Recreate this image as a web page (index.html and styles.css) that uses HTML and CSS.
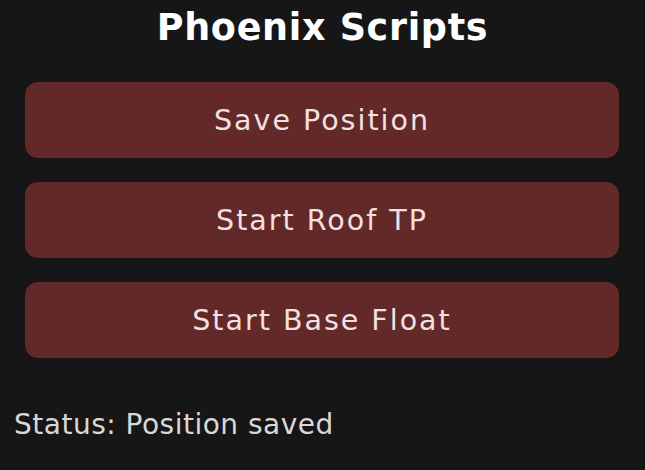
FILE: index.html
```html
<!DOCTYPE html>
<html>
<head>
<meta charset="utf-8">
<link rel="stylesheet" href="styles.css">
</head>
<body>
<main class="panel">
  <h1 class="title">Phoenix Scripts</h1>
  <div class="actions">
    <button class="btn">Save Position</button>
    <button class="btn">Start Roof TP</button>
    <button class="btn">Start Base Float</button>
  </div>
  <p class="status">Status: Position saved</p>
</main>
</body>
</html>
```

FILE: styles.css
```css
html, body {
  margin: 0;
  padding: 0;
  background: #161616;
  height: 100%;
}
.panel {
  font-family: "DejaVu Sans", "Noto Sans", sans-serif;
  padding: 7px 14px 0 14px;
  display: flex;
  flex-direction: column;
}
.title {
  margin: 0;
  text-align: center;
  color: #ffffff;
  font-weight: bold;
  font-size: 36.5px;
  letter-spacing: 0.7px;
  line-height: 42px;
}
.actions {
  margin: 33px 12px 0 11px;
  display: flex;
  flex-direction: column;
  gap: 24px;
}
.btn {
  height: 76px;
  border: none;
  border-radius: 13px;
  background: #632828;
  color: #f3e0e0;
  font-family: inherit;
  font-size: 28.5px;
  letter-spacing: 2px;
  display: flex;
  align-items: center;
  justify-content: center;
  padding: 0;
}
.status {
  margin: 50px 0 0 0;
  color: #d8d8d8;
  font-size: 28px;
  letter-spacing: 0.5px;
  line-height: 33px;
}
```
